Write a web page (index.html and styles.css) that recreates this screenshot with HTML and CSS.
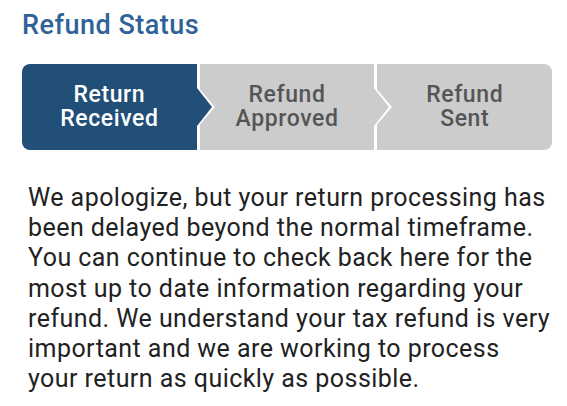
FILE: index.html
```html
<!DOCTYPE html>
<html lang="en">
<head>
  <meta charset="UTF-8">
  <meta name="viewport" content="width=device-width, initial-scale=1.0">
  <title>Refund Status</title>
  <link rel="stylesheet" href="styles.css">
</head>
<body>
  <div class="container">
    <h1>Refund Status</h1>

    <!-- Progress tracker -->
    <div class="steps">
      <div class="step active">Return<br>Received</div>
      <div class="step">Refund<br>Approved</div>
      <div class="step last">Refund<br>Sent</div>
    </div>

    <p class="message">
      We apologize, but your return processing has been delayed beyond the normal timeframe.
      You can continue to check back here for the most up to date information regarding your
      refund. We understand your tax refund is very important and we are working to process
      your return as quickly as possible.
    </p>
  </div>
</body>
</html>
```

FILE: styles.css
```css
/* Reset and Global Styles */
* {
  margin: 0;
  padding: 0;
  box-sizing: border-box;
}
body {
  font-family: Roboto, "Liberation Sans", sans-serif;
  background: #fff;
  color: #222;
}

.container {
  padding: 9px 15px 0 22px;
}

/* Header */
h1 {
  font-size: 27px;
  font-weight: 500;
  letter-spacing: 0.5px;
  color: #2f6299;
  line-height: 32px;
  margin-bottom: 23px;
}

/* Steps */
.steps {
  display: flex;
  gap: 3px;
  height: 86px;
}
.step {
  position: relative;
  flex: 1 1 0;
  display: flex;
  align-items: center;
  justify-content: center;
  text-align: center;
  background: #cccccc;
  color: #555;
  font-size: 23px;
  font-weight: 500;
  letter-spacing: 0.6px;
  line-height: 24px;
}
.step.active {
  background: #224f78;
  color: #fff;
  border-radius: 8px 0 0 8px;
}
.step.last {
  border-radius: 0 8px 8px 0;
}

/* Chevron with white outline */
.step::before,
.step::after {
  content: "";
  position: absolute;
  top: 50%;
  width: 0;
  height: 0;
  z-index: 1;
}
.step::before {
  right: -18px;
  margin-top: -21px;
  border-top: 21px solid transparent;
  border-bottom: 21px solid transparent;
  border-left: 18px solid #fff;
}
.step::after {
  right: -15px;
  margin-top: -19px;
  border-top: 19px solid transparent;
  border-bottom: 19px solid transparent;
  border-left: 15px solid #cccccc;
  z-index: 2;
}
.step.active::after {
  border-left-color: #224f78;
}
.step.last::before,
.step.last::after {
  display: none;
}

/* Message */
.message {
  margin-top: 33px;
  padding-left: 6px;
  font-size: 25px;
  letter-spacing: 0.45px;
  line-height: 30.2px;
}
```
